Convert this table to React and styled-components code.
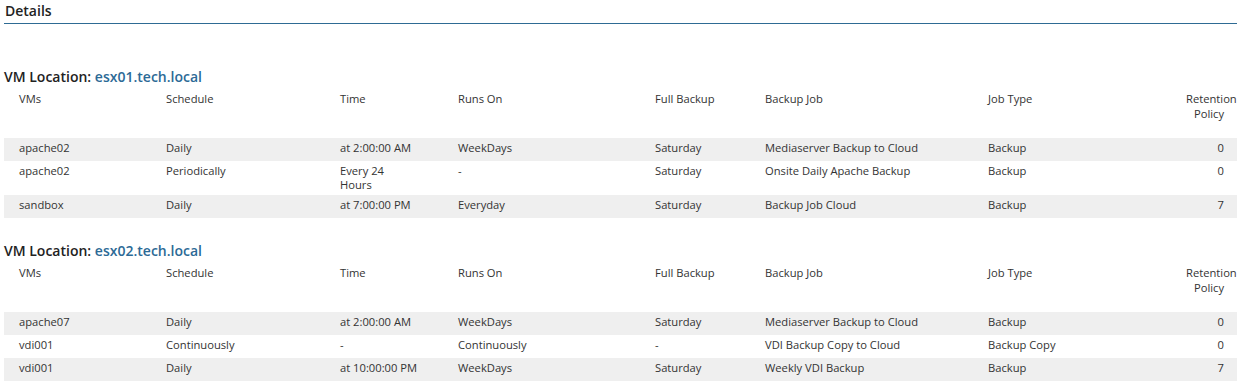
import React from 'react';
import styled, { createGlobalStyle } from 'styled-components';

const GlobalStyle = createGlobalStyle`
  body {
    margin: 0;
    background: #fff;
    font-family: "Open Sans", "Noto Sans", Arial, sans-serif;
    color: #333;
  }
`;

const Page = styled.div`
  padding: 0 4px;
  width: 1233px;
`;

const Title = styled.h2`
  margin: 0;
  padding: 2px 1px 0;
  height: 21px;
  font-size: 14px;
  font-weight: 600;
  line-height: 17px;
  color: #222;
  border-bottom: 1px solid #2e6b94;
`;

const Section = styled.section`
  margin-top: ${p => p.first ? '44px' : '24px'};
`;

const Heading = styled.h3`
  margin: 0 0 2px;
  height: 18px;
  font-size: 14px;
  font-weight: 600;
  line-height: 18px;
  color: #222;
`;

const Host = styled.span`
  color: #2c6a96;
`;

const Table = styled.table`
  width: 1233px;
  border-collapse: collapse;
  table-layout: fixed;
  font-size: 11.2px;
`;

const Th = styled.th`
  padding: 3px 15px 17px;
  height: 30px;
  vertical-align: top;
  font-weight: 400;
  line-height: 15px;
  text-align: ${p => p.right ? 'right' : 'left'};
  ${p => p.right && 'padding-right: 13px;'}
  color: #333;
`;

const Row = styled.tr`
  background: ${p => p.shaded ? '#efefef' : '#fff'};
`;

const Td = styled.td`
  padding: 3px 15px;
  height: 17px;
  vertical-align: top;
  line-height: 14px;
  text-align: ${p => p.right ? 'right' : 'left'};
  ${p => p.right && 'padding-right: 13px;'}
  color: #333;
`;

const widths = [147, 174, 118, 197, 110, 223, 198, 66];

const locations = [
  {
    host: 'esx01.tech.local',
    rows: [
      ['apache02', 'Daily', 'at 2:00:00 AM', 'WeekDays', 'Saturday', 'Mediaserver Backup to Cloud', 'Backup', '0'],
      ['apache02', 'Periodically', ['Every 24', 'Hours'], '-', 'Saturday', 'Onsite Daily Apache Backup', 'Backup', '0'],
      ['sandbox', 'Daily', 'at 7:00:00 PM', 'Everyday', 'Saturday', 'Backup Job Cloud', 'Backup', '7'],
    ],
  },
  {
    host: 'esx02.tech.local',
    rows: [
      ['apache07', 'Daily', 'at 2:00:00 AM', 'WeekDays', 'Saturday', 'Mediaserver Backup to Cloud', 'Backup', '0'],
      ['vdi001', 'Continuously', '-', 'Continuously', '-', 'VDI Backup Copy to Cloud', 'Backup Copy', '0'],
      ['vdi001', 'Daily', 'at 10:00:00 PM', 'WeekDays', 'Saturday', 'Weekly VDI Backup', 'Backup', '7'],
    ],
  },
];

const columns = ['VMs', 'Schedule', 'Time', 'Runs On', 'Full Backup', 'Backup Job', 'Job Type'];

function Cell({ value, right }) {
  if (Array.isArray(value)) {
    return (
      <Td right={right}>
        {value[0]}<br />{value[1]}
      </Td>
    );
  }
  return <Td right={right}>{value}</Td>;
}

function LocationTable({ location, first }) {
  return (
    <Section first={first}>
      <Heading>VM Location: <Host>{location.host}</Host></Heading>
      <Table>
        <colgroup>
          {widths.map((w, i) => <col key={i} style={{ width: w }} />)}
        </colgroup>
        <thead>
          <tr>
            {columns.map(c => <Th key={c}>{c}</Th>)}
            <Th right>Retention<br />Policy</Th>
          </tr>
        </thead>
        <tbody>
          {location.rows.map((row, i) => (
            <Row key={i} shaded={i % 2 === 0}>
              {row.map((v, j) => <Cell key={j} value={v} right={j === 7} />)}
            </Row>
          ))}
        </tbody>
      </Table>
    </Section>
  );
}

export default function App() {
  return (
    <>
      <GlobalStyle />
      <Page>
        <Title>Details</Title>
        {locations.map((loc, i) => (
          <LocationTable key={loc.host} location={loc} first={i === 0} />
        ))}
      </Page>
    </>
  );
}
